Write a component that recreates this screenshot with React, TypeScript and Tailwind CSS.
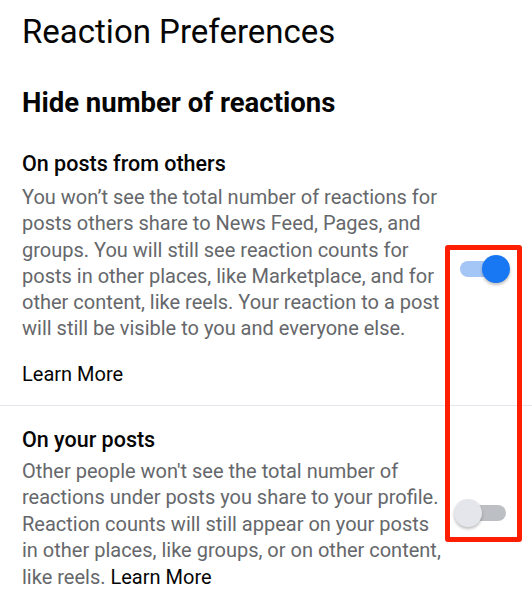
import React from "react";

function Toggle({ on, className = "" }: { on: boolean; className?: string }) {
  return (
    <div className={"relative h-[28px] w-[56px] shrink-0 " + className}>
      <div
        className={
          on
            ? "absolute left-[6px] right-[4px] top-[6px] h-[16px] rounded-full bg-[#a4c6f6]"
            : "absolute left-[6px] right-[4px] top-[6px] h-[16px] rounded-full bg-[#bcc0c4]"
        }
      />
      <div
        className={
          on
            ? "absolute left-[28px] top-0 h-[28px] w-[28px] rounded-full bg-[#1877f2] shadow-[0_2px_3px_rgba(0,0,0,0.25)]"
            : "absolute left-0 top-0 h-[28px] w-[28px] rounded-full bg-[#e4e6eb] shadow-[0_2px_3px_rgba(0,0,0,0.25)]"
        }
      />
    </div>
  );
}

export default function App() {
  return (
    <div className="relative h-[600px] w-[532px] overflow-hidden bg-white font-['Roboto',sans-serif] text-[#050505]">
      <div className="px-[22px] pt-[12px]">
        <h1 className="text-[33px] leading-[40px] font-normal">Reaction Preferences</h1>
        <h2 className="mt-[35px] text-[27.5px] leading-[32px] font-bold">Hide number of reactions</h2>
      </div>

      <section className="flex items-center gap-[4px] px-[22px] pt-[32px]">
        <div className="flex-1">
          <h3 className="text-[21.5px] leading-[26px] font-medium">On posts from others</h3>
          <p className="mt-[7px] text-[20px] leading-[26.3px] text-[#65676b]">
            You won’t see the total number of reactions for posts others share to News Feed, Pages, and
            groups. You will still see reaction counts for posts in other places, like Marketplace, and for
            other content, like reels. Your reaction to a post will still be visible to you and everyone else.
          </p>
          <a className="mt-[19px] block text-[20px] leading-[26px]">Learn More</a>
        </div>
        <Toggle on />
      </section>

      <div className="mt-[18px] h-px bg-[#e4e6eb]" />

      <section className="flex items-center gap-[4px] px-[22px] pt-[21px] pb-[20px]">
        <div className="flex-1">
          <h3 className="text-[21.5px] leading-[26px] font-medium">On your posts</h3>
          <p className="mt-[5px] text-[20px] leading-[26.5px] text-[#65676b]">
            Other people won't see the total number of reactions under posts you share to your profile.
            Reaction counts will still appear on your posts in other places, like groups, or on other content,
            like reels. <a className="text-[#050505]">Learn More</a>
          </p>
        </div>
        <Toggle on={false} className="mt-[8px]" />
      </section>

      <div className="absolute left-[445px] top-[245px] h-[297px] w-[77px] rounded-[3px] border-[5px] border-[#ff1e00]" />
    </div>
  );
}
